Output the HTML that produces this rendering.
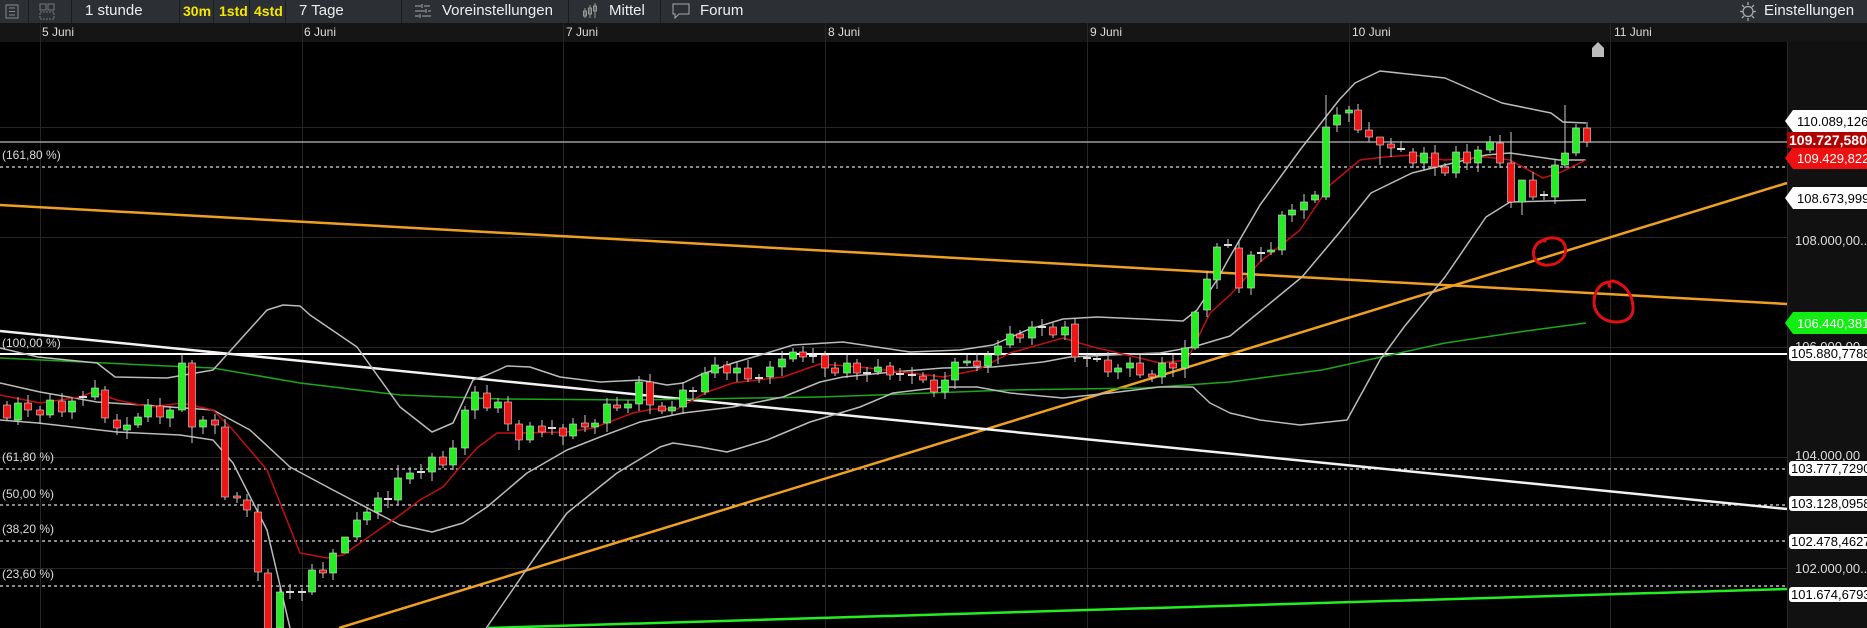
<!DOCTYPE html>
<html><head><meta charset="utf-8"><style>
*{margin:0;padding:0;box-sizing:border-box}
body{width:1867px;height:628px;overflow:hidden;background:#000;font-family:"Liberation Sans",sans-serif;position:relative}
#tb{position:absolute;left:0;top:0;width:1867px;height:23px;background:#2c2f34;color:#eee;font-size:15px}
#tb .s{position:absolute;top:0;width:1px;height:23px;background:#1a1c1f}
#tb .t{position:absolute;top:2px;line-height:18px;white-space:nowrap}
#tb .y{color:#f5e800;font-weight:bold;font-size:14px}
#dr{position:absolute;left:0;top:23px;width:1867px;height:19px;background:#151515;color:#ddd;font-size:12px}
#dr span{position:absolute;top:2px}
#ax{position:absolute;left:1787px;top:42px;width:80px;height:586px;background:#111;border-left:1px solid #2a2a2a}
svg{position:absolute;left:0;top:0}
.fib{position:absolute;left:2px;color:#ddd;font-size:12px;line-height:14px}
</style></head><body>
<div id="tb">
<svg width="20" height="23" style="left:4px"><rect x="2" y="5" width="12" height="13" fill="none" stroke="#888"/><path d="M5 8h6M5 11.5h6M5 15h6" stroke="#888"/></svg>
<div class="s" style="left:28px"></div>
<svg width="20" height="23" style="left:38px"><rect x="2" y="4" width="6" height="6" fill="none" stroke="#777"/><rect x="10" y="4" width="6" height="6" fill="none" stroke="#777"/><rect x="2" y="12" width="14" height="7" fill="none" stroke="#777" stroke-dasharray="2 1"/></svg>
<div class="s" style="left:71px"></div>
<div class="t" style="left:85px">1 stunde</div>
<div class="s" style="left:179px"></div>
<div class="t y" style="left:183px">30m</div>
<div class="s" style="left:213px"></div>
<div class="t y" style="left:219px">1std</div>
<div class="s" style="left:249px"></div>
<div class="t y" style="left:254px">4std</div>
<div class="s" style="left:285px"></div>
<div class="t" style="left:299px">7 Tage</div>
<div class="s" style="left:401px"></div>
<svg width="20" height="23" style="left:413px"><path d="M2 6h6M11 6h6M2 11h10M15 11h3M2 16h4M9 16h9M9 4v4M13 9v4M7 14v4" stroke="#aaa"/></svg>
<div class="t" style="left:442px">Voreinstellungen</div>
<div class="s" style="left:568px"></div>
<svg width="20" height="23" style="left:581px"><path d="M4 8v10M9 5v13M14 3v15" stroke="#999"/><rect x="2.5" y="11" width="3" height="5" fill="none" stroke="#999"/><rect x="7.5" y="8" width="3" height="6" fill="none" stroke="#999"/><rect x="12.5" y="6" width="3" height="5" fill="none" stroke="#999"/></svg>
<div class="t" style="left:609px">Mittel</div>
<div class="s" style="left:660px"></div>
<svg width="22" height="23" style="left:671px"><path d="M2 4h16v10H8l-4 4v-4H2z" fill="none" stroke="#aaa"/></svg>
<div class="t" style="left:700px">Forum</div>
<svg width="20" height="23" style="left:1738px"><circle cx="10" cy="11.5" r="5" fill="none" stroke="#aaa" stroke-width="1.3"/><path d="M10 2v3M10 18v3M2 11.5h3M15 11.5h3M4 5l2 2M14 16l2 2M4 18l2-2M14 7l2-2" stroke="#aaa" stroke-width="1.3"/></svg>
<div class="t" style="left:1764px">Einstellungen</div>
</div>
<div id="dr"><span style="left:42px">5 Juni</span><span style="left:304px">6 Juni</span><span style="left:566px">7 Juni</span><span style="left:828px">8 Juni</span><span style="left:1090px">9 Juni</span><span style="left:1352px">10 Juni</span><span style="left:1614px">11 Juni</span></div>
<div id="ax"></div>
<svg id="ch" width="1867" height="628"></svg>
<div class="fib" style="top:148px">(161,80 %)</div>
<div class="fib" style="top:336px">(100,00 %)</div>
<div class="fib" style="top:450px">(61,80 %)</div>
<div class="fib" style="top:487px">(50,00 %)</div>
<div class="fib" style="top:522px">(38,20 %)</div>
<div class="fib" style="top:567px">(23,60 %)</div>
<script>
var S=document.getElementById('ch'),h='';
function L(x1,y1,x2,y2,c,w,d){h+='<line x1="'+x1+'" y1="'+y1+'" x2="'+x2+'" y2="'+y2+'" stroke="'+c+'" stroke-width="'+w+'"'+(d?' stroke-dasharray="'+d+'"':'')+'/>';}
function P(a,c,w){h+='<polyline fill="none" stroke="'+c+'" stroke-width="'+w+'" stroke-linejoin="round" points="'+a.map(function(p){return p.join(',')}).join(' ')+'"/>';}
[40,302,563,825,1087,1349,1610].forEach(function(x){L(x+.5,23,x+.5,628,'#262626',1)});
[127,237,347,457,568].forEach(function(y){L(0,y+.5,1787,y+.5,'#262626',1)});
[167,469,505,541,586].forEach(function(y){L(0,y,1787,y,'#ddd',1.3,'3 3')});
L(0,142,1787,142,'#bbb',1.2);
L(0,354,1787,354,'#fff',2);
L(0,205,1787,304,'#f0a020',2.5);
L(339,628,1787,183,'#f0a020',2.5);
L(0,331,1787,509,'#f2f2f2',2.5);
L(488,628,1787,589,'#22ee22',2.5);
P([[0,358],[167,366],[213,368],[300,383],[400,395],[500,399],[633,400],[820,397],[877,395],[1010,390],[1143,388],[1230,382],[1322,370],[1445,343],[1526,331],[1586,323]],'#1aa81a',1.5);
P([[0,348],[38,357],[97,363],[115,377],[167,378],[213,370],[240,340],[267,310],[283,305],[300,306],[310,315],[357,347],[400,407],[432,432],[453,423],[473,380],[487,375],[507,366],[530,367],[560,377],[600,382],[640,380],[667,385],[683,383],[700,375],[733,363],[767,353],[793,345],[843,342],[910,352],[960,350],[993,345],[1027,330],[1063,319],[1097,317],[1143,319],[1183,321],[1197,310],[1217,280],[1228,260],[1260,205],[1300,150],[1339,100],[1355,83],[1380,71],[1445,78],[1502,103],[1551,113],[1563,122],[1586,123]],'#bbb',1.5);
P([[0,383],[40,392],[97,402],[170,407],[213,410],[250,430],[290,467],[333,490],[400,525],[432,532],[463,523],[487,507],[527,473],[567,450],[600,437],[640,422],[683,413],[733,407],[783,397],[820,382],[843,377],[893,372],[943,368],[993,367],[1043,362],[1070,357],[1110,355],[1160,353],[1193,347],[1230,336],[1241,327],[1302,277],[1339,233],[1371,193],[1412,173],[1486,155],[1510,153],[1559,160],[1586,160]],'#bbb',1.5);
P([[0,420],[38,423],[117,432],[180,435],[213,440],[233,463],[267,530],[290,628]],'#bbb',1.5);
P([[480,640],[487,627],[533,560],[567,513],[617,473],[660,447],[673,443],[700,447],[727,452],[767,440],[810,422],[860,407],[893,393],[943,387],[977,387],[1010,393],[1063,398],[1110,393],[1160,387],[1193,387],[1210,403],[1230,413],[1260,420],[1300,425],[1347,420],[1380,360],[1404,327],[1445,277],[1486,217],[1510,202],[1586,200]],'#bbb',1.5);
P([[0,395],[40,403],[80,397],[93,392],[117,400],[150,407],[182,403],[213,410],[233,430],[267,470],[300,553],[327,558],[343,555],[400,515],[420,500],[443,487],[460,467],[477,448],[497,433],[520,433],[567,432],[593,428],[633,413],[653,409],[677,409],[707,392],[733,383],[783,377],[820,364],[860,367],[910,373],[943,377],[977,370],[1010,353],[1063,338],[1093,347],[1127,355],[1160,363],[1187,360],[1210,313],[1230,295],[1260,262],[1300,230],[1330,185],[1360,160],[1384,157],[1412,155],[1445,160],[1486,157],[1510,160],[1543,178],[1559,173],[1586,160]],'#c01010',1.5);
var C=[[7,405,418],[18,420,403],[28,403,410],[40,410,415],[50,415,400],[62,401,412],[72,412,401],[83,397,397],[95,397,388],[105,390,418],[117,420,428],[127,430,425],[138,425,417],[148,417,405],[160,406,417],[170,418,410],[182,410,363],[192,363,427],[203,427,420],[215,420,425],[225,427,497],[237,496,498],[247,500,510],[258,512,572],[268,573,640],[280,628,592],[290,592,592],[302,592,592],[312,592,570],[323,570,573],[333,573,553],[345,553,537],[357,537,520],[367,520,512],[378,512,498],[388,499,499],[398,500,478],
[410,479,473],[421,472,472],[432,472,457],[443,457,465],[453,465,448],[465,448,410],[475,410,392],[487,393,408],[498,408,402],[508,402,424],[519,424,440],[530,440,426],[542,426,432],[552,428,428],[563,428,436],[573,436,424],[585,423,427],[595,427,423],[607,423,404],[617,405,408],[628,408,404],[639,404,382],[650,382,405],[662,406,411],[672,411,407],[683,407,390],[693,391,391],[705,392,373],[715,373,365],[727,365,373],[737,373,368],[748,368,379],[759,378,378],[770,377,367],[782,367,359],[793,359,352],[803,352,357],[813,356,356],
[825,355,368],[835,368,373],[847,373,363],[857,363,373],[867,373,373],[878,372,367],[890,366,375],[900,374,374],[912,375,375],[923,376,380],[934,380,392],[945,392,380],[955,380,362],[967,363,361],[977,361,366],[988,366,355],[998,355,346],[1010,345,334],[1020,334,338],[1032,338,327],[1042,327,327],[1053,327,335],[1065,335,327],[1075,324,357],[1087,358,358],[1097,359,359],[1108,360,372],[1118,372,368],[1130,368,363],[1140,363,375],[1152,374,377],[1162,377,363],[1173,363,368],[1185,368,348],[1195,348,312],[1207,310,279],[1217,280,247],[1228,245,245],
[1239,248,288],[1251,288,255],[1261,253,253],[1271,252,250],[1282,250,215],[1292,215,210],[1304,210,202],[1315,200,195],[1326,197,127],[1337,125,115],[1349,113,110],[1358,110,130],[1369,130,137],[1380,137,145],[1391,144,148],[1401,149,149],[1413,152,163],[1424,163,153],[1435,153,167],[1445,167,173],[1456,173,152],[1467,152,163],[1478,163,150],[1490,150,142],[1500,143,163],[1511,163,202],[1522,202,180],[1533,180,197],[1544,195,195],[1555,197,165],[1565,165,153],[1576,153,128],[1587,128,142]];
var LW={1326:[95,200],1565:[105,168],1511:[132,208],1075:[318,362],182:[355,412],192:[360,443],398:[465,505],519:[420,450],1185:[340,378],1195:[335,350],345:[548,545],1522:[198,215],1380:[140,165]};
C.forEach(function(c,i){var x=c[0],o=c[1],cl=c[2],t=Math.min(o,cl),b=Math.max(o,cl);
var w=LW[x]||[t-4-(i%3)*2,b+3+(i%4)*2];
L(x,w[0],x,w[1],'#ccc',1);
if(b-t<2){L(x-4,t,x+4,t,'#ddd',2)}else{
h+='<rect x="'+(x-3.5)+'" y="'+t+'" width="7" height="'+(b-t)+'" fill="'+(cl<o?'#22ee22':'#ee1515')+'" stroke="#ddd" stroke-width="0.6"/>';}});
h+='<path d="M1540 242c8-6 22-6 25 4 3 10-6 20-20 19-10-1-14-10-10-18 2-4 6-7 10-6" fill="none" stroke="#e01010" stroke-width="3" stroke-linecap="round"/>';
h+='<path d="M1610 282c-10 0-16 10-16 20 0 12 10 20 22 20 12 0 18-6 17-16-1-12-8-22-20-25-4 0-5 3-3 6" fill="none" stroke="#e01010" stroke-width="3" stroke-linecap="round"/>';
h+='<path d="M1592 57v-9l6-6 6 6v9z" fill="#bbb"/>';
function T(y,txt,bg,fg,b){h+='<path d="M1785 '+y+'l8-11h74v22h-74z" fill="'+bg+'"/><text x="1797" y="'+(y+5)+'" font-family="Liberation Sans" font-size="13" fill="'+fg+'"'+(b?' font-weight="bold"':'')+'>'+txt+'</text>';}
function B(y,txt){h+='<rect x="1789" y="'+(y-7)+'" width="80" height="15" rx="3" fill="#fff"/><text x="1791" y="'+(y+5)+'" font-family="Liberation Sans" font-size="13" fill="#000">'+txt+'</text>';}
function X(y,txt){h+='<text x="1795" y="'+(y+5)+'" font-family="Liberation Sans" font-size="13" fill="#ddd">'+txt+'</text>';}
X(240,'108.000,00...');X(455,'104.000,00');X(568,'102.000,00...');X(346,'106.000,00');
T(121,'110.089,126','#fff','#000');
T(158,'109.429,822','#ee1111','#fff');
h+='<rect x="1787" y="132" width="80" height="16" fill="#b00000"/><text x="1789" y="145" font-family="Liberation Sans" font-size="14" font-weight="bold" fill="#fff">109.727,580</text>';
T(198,'108.673,999','#fff','#000');
T(323,'106.440,381','#11ee11','#fff');
B(353,'105.880,7788');B(468,'103.777,7290');B(503,'103.128,0958');B(541,'102.478,4627');B(594,'101.674,6793');
S.innerHTML=h;
</script>
</body></html>
